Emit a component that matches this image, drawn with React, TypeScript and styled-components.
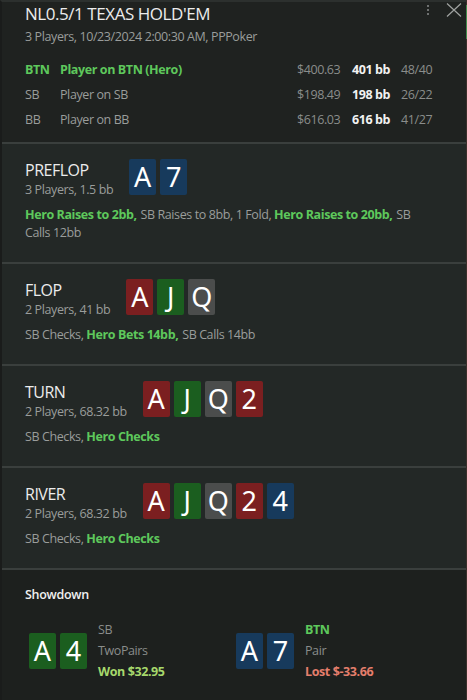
import React from "react";
import styled, { createGlobalStyle } from "styled-components";

const Global = createGlobalStyle`
  html, body { margin: 0; padding: 0; background: #1f2220; }
  body { font-family: "Open Sans", "Noto Sans", sans-serif; }
  * { box-sizing: border-box; }
`;

const Frame = styled.div`
  display: flex;
  width: 467px;
  height: 700px;
  overflow: hidden;
  background: #1f2220;
`;

const Panel = styled.div`
  flex: 1;
  display: flex;
  flex-direction: column;
  border-top: 2px solid #2c302e;
  border-left: 2px solid #1a1c1b;
`;

const Track = styled.div`
  width: 4px;
  background: #3a2f2a;
  display: flex;
  flex-direction: column;
  padding-top: 5px;
`;

const Thumb = styled.div`
  height: 34px;
  background: #3f8a4a;
`;

const Header = styled.div`
  position: relative;
  padding: 1px 33px 12px 23px;
  background: #1f2220;
  border-bottom: 2px solid #3a3f3d;
`;

const Title = styled.div`
  font-size: 17px;
  line-height: 22px;
  color: #ececec;
  letter-spacing: -0.45px;
`;

const Sub = styled.div`
  font-size: 12.5px;
  line-height: 20px;
  color: #9a9d9b;
  margin-top: 2px;
  letter-spacing: -0.4px;
`;

const Tools = styled.div`
  position: absolute;
  top: 1px;
  right: 4px;
  display: flex;
  align-items: center;
  gap: 16px;
`;

const Players = styled.div`
  display: grid;
  grid-template-columns: 35px 1fr 53px 40px 43px;
  row-gap: 5px;
  margin-top: 13px;
  font-size: 12.5px;
  line-height: 20px;
  letter-spacing: -0.4px;
`;

const Cell = styled.div<{ $hero?: boolean; $bold?: boolean; $right?: boolean }>`
  color: ${(p) => (p.$hero ? "#5ec85c" : p.$bold ? "#f2f2f2" : "#9a9d9b")};
  font-weight: ${(p) => (p.$hero || p.$bold ? 700 : 400)};
  text-align: ${(p) => (p.$right ? "right" : "left")};
  white-space: nowrap;
`;

const Muted = styled(Cell)`
  color: #8a8d8b;
`;

const Ratio = styled(Muted)`
  padding-left: 11px;
`;

const Street = styled.div`
  background: #232826;
  padding: 15px 30px 20px 23px;
  border-bottom: 2px solid #3a3f3d;
`;

const StreetHead = styled.div`
  display: flex;
  align-items: flex-start;
  gap: 16px;
`;

const Info = styled.div`
  display: flex;
  flex-direction: column;
  padding-top: 2px;
`;

const StreetName = styled.div`
  font-size: 16px;
  line-height: 19px;
  color: #ececec;
  letter-spacing: -0.5px;
`;

const StreetSub = styled.div`
  font-size: 12.5px;
  line-height: 19px;
  color: #9a9d9b;
  letter-spacing: -0.4px;
`;

const Cards = styled.div`
  display: flex;
  gap: 4px;
`;

const cardColors: Record<string, string> = {
  s: "#173a5c",
  h: "#7b1f20",
  c: "#1b5e1f",
  d: "#4b4d4c",
};

const Card = styled.div<{ $suit: string }>`
  width: 27px;
  height: 36px;
  border-radius: 2px;
  background: ${(p) => cardColors[p.$suit]};
  color: #ffffff;
  font-family: "Noto Sans", "Open Sans", sans-serif;
  font-size: 27px;
  line-height: 36px;
  text-align: center;
`;

const Actions = styled.div`
  margin-top: 7px;
  font-size: 12.5px;
  line-height: 18px;
  color: #9a9d9b;
  letter-spacing: -0.4px;
`;

const Hero = styled.span`
  color: #5ec85c;
  font-weight: 700;
  margin-right: 1px;
`;

const Act = styled.span`
  white-space: nowrap;
`;

const Showdown = styled.div`
  flex: 1;
  background: #1d201e;
  padding: 16px 23px 0 23px;
`;

const ShowTitle = styled.div`
  font-size: 12.5px;
  font-weight: 600;
  line-height: 18px;
  color: #f0f0f0;
  letter-spacing: -0.3px;
`;

const Hands = styled.div`
  display: grid;
  grid-template-columns: 207px 207px;
  margin-top: 15px;
  padding-left: 4px;
`;

const Hand = styled.div`
  display: flex;
  align-items: center;
  gap: 11px;
`;

const HandText = styled.div`
  display: flex;
  flex-direction: column;
  font-size: 12.5px;
  line-height: 21px;
  letter-spacing: -0.4px;
`;

const Line = styled.div<{ $tone?: "hero" | "won" | "lost" }>`
  color: ${(p) =>
    p.$tone === "hero"
      ? "#5ec85c"
      : p.$tone === "won"
      ? "#a6d86c"
      : p.$tone === "lost"
      ? "#e47e6c"
      : "#8a8d8b"};
  font-weight: ${(p) => (p.$tone ? 700 : 400)};
`;

const players = [
  { pos: "BTN", name: "Player on BTN (Hero)", cash: "$400.63", bb: "401 bb", r: "48/40", hero: true },
  { pos: "SB", name: "Player on SB", cash: "$198.49", bb: "198 bb", r: "26/22" },
  { pos: "BB", name: "Player on BB", cash: "$616.03", bb: "616 bb", r: "41/27" },
];

type C = [string, string];

const streets: { name: string; sub: string; cards: C[]; actions: React.ReactNode }[] = [
  {
    name: "PREFLOP",
    sub: "3 Players, 1.5 bb",
    cards: [["A", "s"], ["7", "s"]],
    actions: (
      <>
        <Hero>Hero Raises to 2bb,</Hero> <Act>SB Raises to 8bb,</Act> <Act>1 Fold,</Act>{" "}
        <Hero>Hero Raises to 20bb,</Hero> <Act>SB</Act> <Act>Calls 12bb</Act>
      </>
    ),
  },
  {
    name: "FLOP",
    sub: "2 Players, 41 bb",
    cards: [["A", "h"], ["J", "c"], ["Q", "d"]],
    actions: (
      <>
        <Act>SB Checks,</Act> <Hero>Hero Bets 14bb,</Hero> <Act>SB Calls 14bb</Act>
      </>
    ),
  },
  {
    name: "TURN",
    sub: "2 Players, 68.32 bb",
    cards: [["A", "h"], ["J", "c"], ["Q", "d"], ["2", "h"]],
    actions: (
      <>
        <Act>SB Checks,</Act> <Hero>Hero Checks</Hero>
      </>
    ),
  },
  {
    name: "RIVER",
    sub: "2 Players, 68.32 bb",
    cards: [["A", "h"], ["J", "c"], ["Q", "d"], ["2", "h"], ["4", "s"]],
    actions: (
      <>
        <Act>SB Checks,</Act> <Hero>Hero Checks</Hero>
      </>
    ),
  },
];

export default function App() {
  return (
    <Frame>
      <Global />
      <Panel>
        <Header>
          <Title>NL0.5/1 TEXAS HOLD'EM</Title>
          <Sub>3 Players, 10/23/2024 2:00:30 AM, PPPoker</Sub>
          <Tools>
            <svg width="4" height="14" viewBox="0 0 4 14">
              <circle cx="2" cy="3" r="1" fill="#8a8d8b" />
              <circle cx="2" cy="7" r="1" fill="#8a8d8b" />
              <circle cx="2" cy="11" r="1" fill="#8a8d8b" />
            </svg>
            <svg width="16" height="14" viewBox="0 0 16 14">
              <path d="M1 0.5 L15 13.5 M15 0.5 L1 13.5" stroke="#a0a3a1" strokeWidth="1.2" />
            </svg>
          </Tools>
          <Players>
            {players.map((p) => (
              <React.Fragment key={p.pos}>
                <Cell $hero={p.hero}>{p.pos}</Cell>
                <Cell $hero={p.hero}>{p.name}</Cell>
                <Muted>{p.cash}</Muted>
                <Cell $bold $right>{p.bb}</Cell>
                <Ratio>{p.r}</Ratio>
              </React.Fragment>
            ))}
          </Players>
        </Header>
        {streets.map((s) => (
          <Street key={s.name}>
            <StreetHead>
              <Info>
                <StreetName>{s.name}</StreetName>
                <StreetSub>{s.sub}</StreetSub>
              </Info>
              <Cards>
                {s.cards.map(([r, suit], i) => (
                  <Card key={i} $suit={suit}>{r}</Card>
                ))}
              </Cards>
            </StreetHead>
            <Actions>{s.actions}</Actions>
          </Street>
        ))}
        <Showdown>
          <ShowTitle>Showdown</ShowTitle>
          <Hands>
            <Hand>
              <Cards>
                <Card $suit="c">A</Card>
                <Card $suit="c">4</Card>
              </Cards>
              <HandText>
                <Line>SB</Line>
                <Line>TwoPairs</Line>
                <Line $tone="won">Won $32.95</Line>
              </HandText>
            </Hand>
            <Hand>
              <Cards>
                <Card $suit="s">A</Card>
                <Card $suit="s">7</Card>
              </Cards>
              <HandText>
                <Line $tone="hero">BTN</Line>
                <Line>Pair</Line>
                <Line $tone="lost">Lost $-33.66</Line>
              </HandText>
            </Hand>
          </Hands>
        </Showdown>
      </Panel>
      <Track>
        <Thumb />
      </Track>
    </Frame>
  );
}
